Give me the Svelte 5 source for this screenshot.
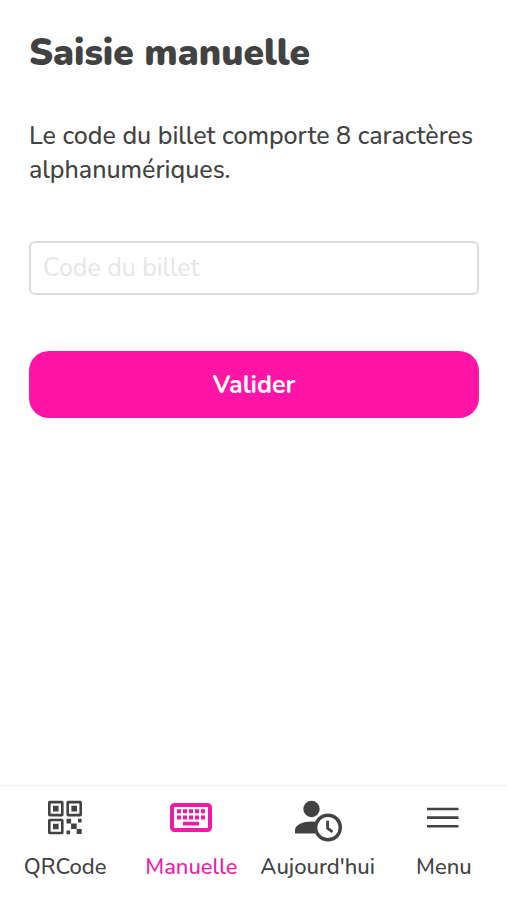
<script lang="ts">
  let code = $state('');
  let active = $state('manuelle');

  const tabs = [
    { id: 'qrcode', label: 'QRCode' },
    { id: 'manuelle', label: 'Manuelle' },
    { id: 'aujourdhui', label: "Aujourd'hui" },
    { id: 'menu', label: 'Menu' }
  ];

  function handleSubmit(event: SubmitEvent) {
    event.preventDefault();
    code = code.trim().toUpperCase();
  }
</script>

<div class="screen">
  <main>
    <h1>Saisie manuelle</h1>
    <form onsubmit={handleSubmit}>
      <label for="code">Le code du billet comporte 8 caractères alphanumériques.</label>
      <input id="code" type="text" placeholder="Code du billet" maxlength="8" autocomplete="off" bind:value={code} />
      <button class="submit" type="submit">Valider</button>
    </form>
  </main>

  <nav>
    {#each tabs as tab (tab.id)}
      <button type="button" class="tab" class:active={active === tab.id} onclick={() => (active = tab.id)}>
        <svg width="48" height="44" viewBox="0 0 48 44" aria-hidden="true">
          {#if tab.id === 'qrcode'}
            <g fill="none" stroke="currentColor" stroke-width="2.6">
              <rect x="8.3" y="2.1" width="13" height="13" rx="0.6" />
              <rect x="26.7" y="2.1" width="13" height="13" rx="0.6" />
              <rect x="8.3" y="20" width="13" height="13" rx="0.6" />
            </g>
            <g fill="currentColor">
              <path d="M12 5.8h5.6v5.6H12zM30.4 5.8H36v5.6h-5.6zM12 23.7h5.6v5.6H12z" />
              <path d="M25.5 18.8h4.6v4.6h-4.6zM37 18.8h3.6v3.6H37zM30.1 23.4h5.6V29h-5.6zM25.5 30.6h3.6v3.6h-3.6zM35.7 29h5v5h-5z" />
            </g>
          {:else if tab.id === 'manuelle'}
            <rect x="5" y="5" width="38" height="25" rx="2.5" fill="none" stroke="currentColor" stroke-width="4" />
            <path
              fill="currentColor"
              d="M10 9.2h4v4h-4zM16 9.2h4v4h-4zM22 9.2h4v4h-4zM28 9.2h4v4h-4zM34 9.2h4v4h-4zM10 15.4h4v4h-4zM16 15.4h4v4h-4zM22 15.4h4v4h-4zM28 15.4h4v4h-4zM34 15.4h4v4h-4zM16 21.8h16v3.8H16z"
            />
          {:else if tab.id === 'aujourdhui'}
            <circle cx="17.5" cy="9" r="8.2" fill="currentColor" />
            <path fill="currentColor" d="M1 33.5v-3.6C1 24.7 9.5 21.4 17.5 21.4c2 0 3.8.2 5.5.5a15 15 0 0 0-1.6 11.6z" />
            <circle cx="34" cy="27.5" r="12.3" fill="#fff" stroke="currentColor" stroke-width="3.4" />
            <path d="M33.6 20.8v7.4l4.8 3.6" fill="none" stroke="currentColor" stroke-width="2.8" />
          {:else}
            <path d="M7 9h31.5M7 17.6h31.5M7 26.2h31.5" stroke="currentColor" stroke-width="2.6" />
          {/if}
        </svg>
        <span>{tab.label}</span>
      </button>
    {/each}
  </nav>
</div>

<style>
  :global(body) {
    margin: 0;
    background: #fefefe;
  }
  .screen {
    display: flex;
    flex-direction: column;
    min-height: 100vh;
    color: #424242;
    font-family: Nunito, "Open Sans", "Noto Sans", sans-serif;
    font-size: 25px;
  }
  main {
    flex: 1;
    padding: 31px 28px 31px 29px;
  }
  h1 {
    margin: 0 0 44px;
    font-size: 37px;
    font-weight: 900;
    line-height: 44px;
  }
  form {
    display: flex;
    flex-direction: column;
  }
  label {
    margin-bottom: 54px;
    font-weight: 500;
    line-height: 34px;
  }
  input {
    box-sizing: border-box;
    width: 100%;
    height: 54px;
    margin-bottom: 56px;
    padding: 0 12px;
    border: 2px solid #dcdcdc;
    border-radius: 6px;
    background: #fff;
    color: inherit;
    font: inherit;
  }
  input::placeholder {
    color: #e6e6e6;
    opacity: 1;
  }
  input:focus {
    outline: none;
    border-color: #ff14a5;
  }
  .submit {
    height: 67px;
    padding: 0 24px;
    border: none;
    border-radius: 20px;
    background: #ff14a5;
    color: #fff;
    font: inherit;
    font-weight: 700;
    cursor: pointer;
  }
  nav {
    display: grid;
    grid-template-columns: repeat(4, 1fr);
    padding-left: 2px;
    border-top: 1px solid #f0f0f0;
    background: #fff;
  }
  .tab {
    display: flex;
    flex-direction: column;
    align-items: center;
    gap: 8px;
    padding: 14px 0 18px;
    border: none;
    background: none;
    color: #424242;
    font: inherit;
    font-size: 22px;
    font-weight: 500;
    line-height: 30px;
    white-space: nowrap;
    cursor: pointer;
  }
  .tab.active {
    color: #ee1ca4;
  }
</style>
